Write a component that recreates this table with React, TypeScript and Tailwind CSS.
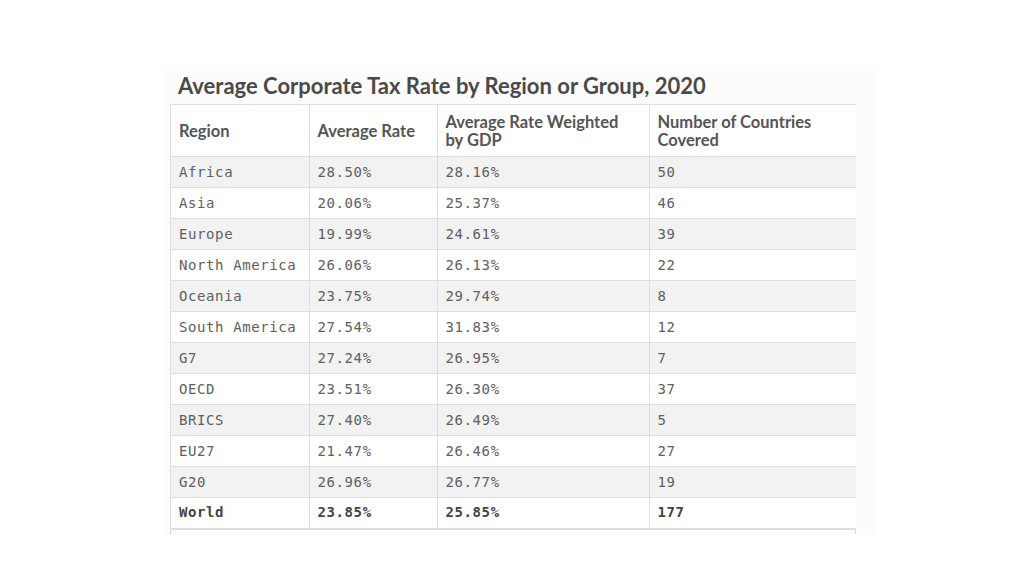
const rows = [
  ["Africa", "28.50%", "28.16%", "50"],
  ["Asia", "20.06%", "25.37%", "46"],
  ["Europe", "19.99%", "24.61%", "39"],
  ["North America", "26.06%", "26.13%", "22"],
  ["Oceania", "23.75%", "29.74%", "8"],
  ["South America", "27.54%", "31.83%", "12"],
  ["G7", "27.24%", "26.95%", "7"],
  ["OECD", "23.51%", "26.30%", "37"],
  ["BRICS", "27.40%", "26.49%", "5"],
  ["EU27", "21.47%", "26.46%", "27"],
  ["G20", "26.96%", "26.77%", "19"],
];

const cols = ["w-[138px]", "w-[128px]", "w-[212px]", "w-[207px]"];

export default function App() {
  return (
    <div className="w-[1024px] h-[576px] bg-white overflow-hidden">
      <div className="ml-[163px] mt-[70px] w-[714px] h-[465px] bg-[#fcfcfc]">
        <h1 className="pl-[15px] h-[34px] leading-[32px] text-[22px] font-bold text-[#4a4a4a] font-['Lato','Liberation_Sans',sans-serif]">
          Average Corporate Tax Rate by Region or Group, 2020
        </h1>
        <div className="ml-[7px] w-[686px] border-l border-r border-[#dedede]">
          <table className="w-[685px] border-collapse table-fixed">
            <thead>
              <tr className="h-[52px] bg-white border-t border-b border-[#dedede] font-['Lato','Liberation_Sans',sans-serif] text-[16.5px] text-[#555] text-left leading-[18px]">
                <th className={`${cols[0]} pl-[8px] pr-2 border-r border-[#dedede] font-bold`}>Region</th>
                <th className={`${cols[1]} pl-[8px] pr-2 border-r border-[#dedede] font-bold`}>Average Rate</th>
                <th className={`${cols[2]} pl-[8px] pr-[28px] border-r border-[#dedede] font-bold`}>Average Rate Weighted by GDP</th>
                <th className={`${cols[3]} pl-[8px] pr-6 font-bold`}>Number of Countries Covered</th>
              </tr>
            </thead>
            <tbody className="font-['DejaVu_Sans_Mono','Liberation_Mono',monospace] text-[14px] tracking-[0.6px] text-[#606060]">
              {rows.map((r, i) => (
                <tr key={r[0]} className={`h-[31px] border-b border-[#dedede] ${i % 2 === 0 ? "bg-[#f2f2f2]" : "bg-white"}`}>
                  {r.map((c, j) => (
                    <td key={j} className={`pl-[8px] whitespace-nowrap ${j < 3 ? "border-r border-[#dedede]" : ""}`}>
                      {c}
                    </td>
                  ))}
                </tr>
              ))}
              <tr className="h-[31px] border-b-2 border-[#dedede] bg-white font-bold text-[#444]">
                <td className="pl-[8px] border-r border-[#dedede]">World</td>
                <td className="pl-[8px] border-r border-[#dedede]">23.85%</td>
                <td className="pl-[8px] border-r border-[#dedede]">25.85%</td>
                <td className="pl-[8px]">177</td>
              </tr>
            </tbody>
          </table>
          <div className="h-[4px]" />
        </div>
      </div>
    </div>
  );
}
